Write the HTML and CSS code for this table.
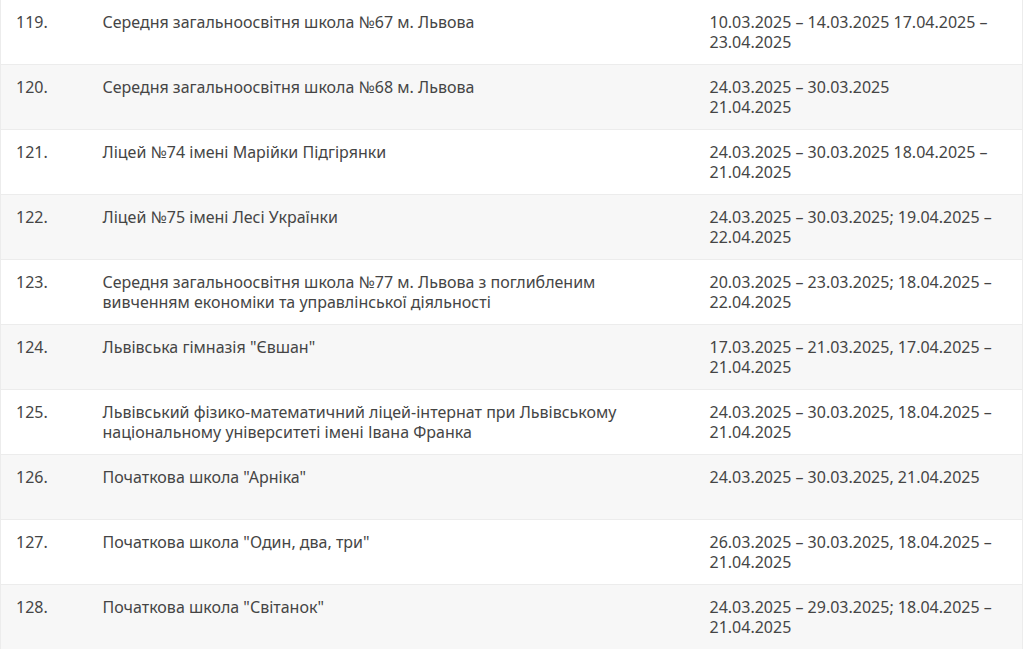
FILE: index.html
```html
<!DOCTYPE html>
<html lang="uk">
<head>
<meta charset="utf-8">
<link rel="stylesheet" href="styles.css">
</head>
<body>
<table class="list">
  <colgroup><col class="c-num"><col class="c-name"><col class="c-date"></colgroup>
  <tbody>
    <tr><td>119.</td><td>Середня загальноосвітня школа №67 м. Львова</td><td>10.03.2025 – 14.03.2025 17.04.2025 – 23.04.2025</td></tr>
    <tr><td>120.</td><td>Середня загальноосвітня школа №68 м. Львова</td><td>24.03.2025 – 30.03.2025<br>21.04.2025</td></tr>
    <tr><td>121.</td><td>Ліцей №74 імені Марійки Підгірянки</td><td>24.03.2025 – 30.03.2025 18.04.2025 – 21.04.2025</td></tr>
    <tr><td>122.</td><td>Ліцей №75 імені Лесі Українки</td><td>24.03.2025 – 30.03.2025; 19.04.2025 – 22.04.2025</td></tr>
    <tr><td>123.</td><td>Середня загальноосвітня школа №77 м. Львова з поглибленим вивченням економіки та управлінської діяльності</td><td>20.03.2025 – 23.03.2025; 18.04.2025 – 22.04.2025</td></tr>
    <tr><td>124.</td><td>Львівська гімназія "Євшан"</td><td>17.03.2025 – 21.03.2025, 17.04.2025 – 21.04.2025</td></tr>
    <tr><td>125.</td><td>Львівський фізико-математичний ліцей-інтернат при Львівському національному університеті імені Івана Франка</td><td>24.03.2025 – 30.03.2025, 18.04.2025 – 21.04.2025</td></tr>
    <tr><td>126.</td><td>Початкова школа "Арніка"</td><td>24.03.2025 – 30.03.2025, 21.04.2025</td></tr>
    <tr><td>127.</td><td>Початкова школа "Один, два, три"</td><td>26.03.2025 – 30.03.2025, 18.04.2025 – 21.04.2025</td></tr>
    <tr><td>128.</td><td>Початкова школа "Світанок"</td><td>24.03.2025 – 29.03.2025; 18.04.2025 – 21.04.2025</td></tr>
  </tbody>
</table>
</body>
</html>
```
FILE: styles.css
```css
html, body {
  margin: 0;
  padding: 0;
  background: #fff;
}
.list {
  width: 1022px;
  border-collapse: collapse;
  table-layout: fixed;
  font-family: "Noto Sans", "Liberation Sans", sans-serif;
  font-size: 16px;
  line-height: 20px;
  color: #454545;
  border-left: 1px solid #ececec;
  border-right: 1px solid #ececec;
}
.c-num { width: 87px; }
.c-name { width: 607px; }
.c-date { width: 328px; }
.list td {
  vertical-align: top;
  padding: 12px 15px 12px 15px;
  height: 40px;
  border-bottom: 1px solid #ececec;
}
.list tr:nth-child(even) td {
  background: #f7f7f7;
}
```
